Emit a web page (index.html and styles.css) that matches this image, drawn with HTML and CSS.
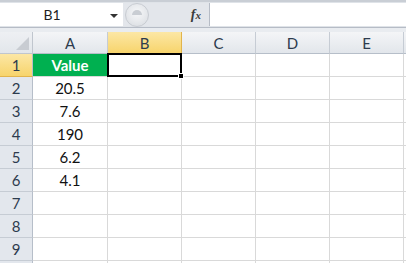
FILE: index.html
```html
<!DOCTYPE html>
<html>
<head>
<meta charset="utf-8">
<link rel="stylesheet" href="styles.css">
</head>
<body>
<div class="app">
  <div class="fbar">
    <div class="namebox">
      <span class="nb-text">B1</span>
      <span class="nb-arrow"></span>
    </div>
    <div class="fmid">
      <span class="knob"></span>
      <span class="fx"><i>f</i><i class="x">x</i></span>
    </div>
    <div class="finput"></div>
  </div>
  <div class="gap"></div>
  <div class="sheet">
    <div class="corner"><span class="tri"></span></div>
    <div class="ch">A</div>
    <div class="ch sel">B</div>
    <div class="ch">C</div>
    <div class="ch">D</div>
    <div class="ch">E</div>
    <div class="ch last"></div>

    <div class="rh sel">1</div>
    <div class="c val hdr">Value</div>
    <div class="c active"><span class="handle"></span></div>
    <div class="c"></div><div class="c"></div><div class="c"></div><div class="c last"></div>

    <div class="rh">2</div>
    <div class="c val">20.5</div>
    <div class="c"></div><div class="c"></div><div class="c"></div><div class="c"></div><div class="c last"></div>

    <div class="rh">3</div>
    <div class="c val">7.6</div>
    <div class="c"></div><div class="c"></div><div class="c"></div><div class="c"></div><div class="c last"></div>

    <div class="rh">4</div>
    <div class="c val">190</div>
    <div class="c"></div><div class="c"></div><div class="c"></div><div class="c"></div><div class="c last"></div>

    <div class="rh">5</div>
    <div class="c val">6.2</div>
    <div class="c"></div><div class="c"></div><div class="c"></div><div class="c"></div><div class="c last"></div>

    <div class="rh">6</div>
    <div class="c val">4.1</div>
    <div class="c"></div><div class="c"></div><div class="c"></div><div class="c"></div><div class="c last"></div>

    <div class="rh">7</div>
    <div class="c"></div><div class="c"></div><div class="c"></div><div class="c"></div><div class="c"></div><div class="c last"></div>

    <div class="rh">8</div>
    <div class="c"></div><div class="c"></div><div class="c"></div><div class="c"></div><div class="c"></div><div class="c last"></div>

    <div class="rh">9</div>
    <div class="c"></div><div class="c"></div><div class="c"></div><div class="c"></div><div class="c"></div><div class="c last"></div>

    <div class="rh"></div>
    <div class="c"></div><div class="c"></div><div class="c"></div><div class="c"></div><div class="c"></div><div class="c last"></div>
  </div>
</div>
</body>
</html>
```
FILE: styles.css
```css
* { box-sizing: border-box; }
html, body { margin: 0; padding: 0; }
body {
  width: 406px;
  height: 263px;
  overflow: hidden;
  background: #ffffff;
  font-family: Lato, "Open Sans", "Liberation Sans", sans-serif;
}
.app { width: 406px; }

.fbar {
  display: flex;
  height: 28px;
  background: #dfe3e8;
  border-top: 2px solid #c9ced5;
  border-bottom: 1px solid #b6bcc6;
  padding-top: 1px;
  padding-bottom: 1px;
}
.namebox {
  width: 123px;
  background: #fff;
  display: flex;
  align-items: center;
  position: relative;
}
.nb-text {
  flex: 1;
  text-align: center;
  font-size: 14px;
  color: #1e1e1e;
  padding-right: 6px;
}
.nb-arrow {
  width: 0; height: 0;
  border-left: 4px solid transparent;
  border-right: 4px solid transparent;
  border-top: 4px solid #333;
  margin-right: 5px;
  margin-top: 2px;
}
.fmid {
  width: 86px;
  display: flex;
  align-items: center;
  justify-content: space-between;
  background: #e3e6eb;
}
.knob {
  width: 24px;
  height: 24px;
  margin-left: 2px;
  border-radius: 50%;
  background: radial-gradient(circle at 50% 40%, #f6f7f9 0%, #e9ebee 45%, #d6dadf 100%);
  border: 1px solid #c8ccd2;
  position: relative;
}
.knob::after {
  content: "";
  position: absolute;
  left: 6px; top: 6px;
  width: 10px; height: 5px;
  border-radius: 5px 5px 0 0;
  background: #c9cdd3;
}
.fx {
  font-family: "Liberation Serif", serif;
  font-size: 14px;
  color: #3b3b3b;
  margin-right: 8px;
  font-weight: bold;
}
.fx i { font-style: italic; }
.fx .x { font-size: 11px; }
.finput {
  flex: 1;
  background: #fff;
  border-left: 1px solid #b6bcc6;
}

.gap {
  height: 4px;
  background: #e9ecf0;
}

.sheet {
  display: grid;
  grid-template-columns: 33px 75px 74px 74px 74px 74px 1fr;
  grid-template-rows: 22px repeat(10, 23px);
}
.corner {
  background: linear-gradient(#eef0f3, #e2e6eb);
  border-right: 1px solid #c0c6ce;
  border-bottom: 1px solid #c0c6ce;
  position: relative;
}
.tri {
  position: absolute;
  right: 3px; bottom: 3px;
  width: 0; height: 0;
  border-left: 13px solid transparent;
  border-bottom: 13px solid #c8ccd2;
}
.ch {
  background: linear-gradient(#f4f5f7, #e2e6eb);
  border-right: 1px solid #c6ccd4;
  border-bottom: 1px solid #b6bec9;
  display: flex;
  align-items: center;
  justify-content: center;
  font-size: 15px;
  color: #2d3b4d;
  padding-top: 1px;
}
.ch.sel {
  background: linear-gradient(#fce7a5, #f7d46c);
  border-right: 1px solid #e2b44c;
  border-bottom: 1px solid #e2b44c;
}
.ch.last { border-right: none; }
.rh {
  background: #e3e7ed;
  border-right: 1px solid #b6bec9;
  border-bottom: 1px solid #c6ccd4;
  display: flex;
  align-items: center;
  justify-content: center;
  font-size: 15px;
  color: #2d3b4d;
}
.rh.sel {
  background: linear-gradient(#fce7a5, #f7d46c);
  border-bottom: 1px solid #e2b44c;
}
.c {
  border-right: 1px solid #d9d9d9;
  border-bottom: 1px solid #d9d9d9;
}
.c.last { border-right: none; }
.val {
  display: flex;
  align-items: center;
  justify-content: center;
  font-size: 15px;
  color: #111;
}
.hdr {
  background: #00b050;
  color: #fff;
  font-weight: bold;
  border-right: 1px solid #e0559a;
}
.active {
  border: 2px solid #000;
  margin-left: -1px;
  margin-top: -1px;
  position: relative;
}
.handle {
  position: absolute;
  right: -4px;
  bottom: -4px;
  width: 6px;
  height: 6px;
  background: #000;
  border: 1px solid #fff;
}
```
